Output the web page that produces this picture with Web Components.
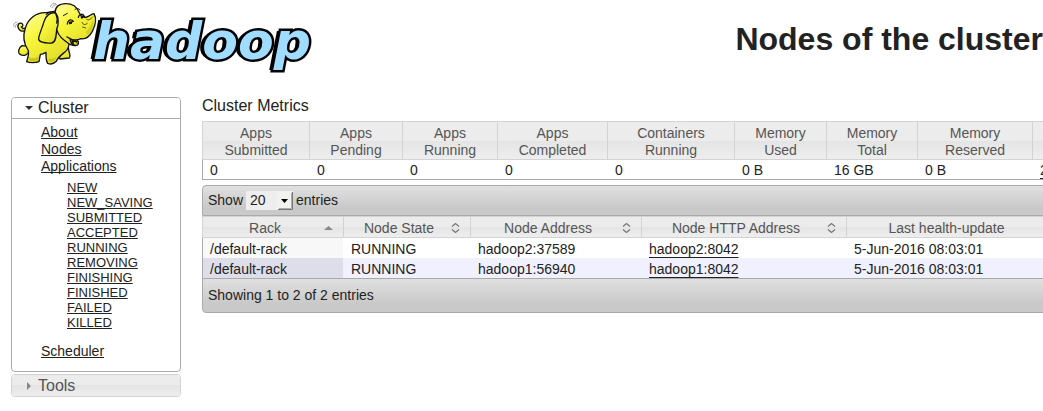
<!DOCTYPE html>
<html lang="en">
<head>
<meta charset="utf-8">
<meta name="viewport" content="width=device-width, initial-scale=1">
<title>Nodes of the cluster</title>
<style>
  body {
    margin: 0;
    overflow-x: hidden;
    background: #fff;
    color: #222;
    font: 14px/17px "Liberation Sans", Arial, sans-serif;
  }
</style>
</head>
<body>
<cluster-page>
  <hadoop-logo slot="logo"></hadoop-logo>
  <span slot="title">Nodes of the cluster</span>
  <nav-section slot="nav" data-label="Cluster" data-open>
    <nav-links></nav-links>
  </nav-section>
  <nav-section slot="nav" data-label="Tools"></nav-section>
  <cluster-metrics></cluster-metrics>
  <nodes-table></nodes-table>
</cluster-page>

<script>
class ClusterPage extends HTMLElement {
  constructor() {
    super();
    this.attachShadow({ mode: 'open' });
  }

  connectedCallback() {
    this.shadowRoot.innerHTML = `
      <style>
        :host {
          display: block;
          overflow: hidden;
        }

        header {
          display: flex;
          justify-content: space-between;
          padding-left: 11px;
          margin-bottom: 19px;
        }

        h1 {
          margin: 0;
          font-size: 32px;
          line-height: 78px;
          white-space: nowrap;
        }

        .layout {
          display: grid;
          grid-template-columns: 170px minmax(0, 1fr);
          gap: 21px;
          padding-left: 11px;
        }

        nav {
          display: flex;
          flex-direction: column;
          gap: 2px;
        }

        /* Wide tables run past the right edge of a narrow window */
        main {
          display: flex;
          flex-direction: column;
          gap: 5px;
          min-width: 916px;
        }
      </style>

      <header>
        <slot name="logo"></slot>
        <h1><slot name="title"></slot></h1>
      </header>
      <div class="layout">
        <nav><slot name="nav"></slot></nav>
        <main><slot></slot></main>
      </div>
    `;
  }
}

class HadoopLogo extends HTMLElement {
  constructor() {
    super();
    this.attachShadow({ mode: 'open' });
  }

  connectedCallback() {
    this.shadowRoot.innerHTML = `
      <style>
        :host {
          display: flex;
          flex: none;
          height: 78px;
        }

        svg {
          flex: none;
          position: relative;
          z-index: 1;
        }

        span {
          margin-left: -7px;
          font: italic bold 52px/82px "DejaVu Sans", Verdana, sans-serif;
          color: #9fdcff;
          -webkit-text-stroke: 5px #000;
          paint-order: stroke fill;
          text-shadow: -2px 0 #000, -4px 0 #000;
        }
      </style>

      <svg width="89" height="70" viewBox="33 0 267 210" aria-hidden="true">
        <defs>
          <linearGradient id="skin" x1="0" y1="0" x2="0.6" y2="1">
            <stop offset="0" stop-color="#ffffa8"/>
            <stop offset="0.45" stop-color="#f8f63c"/>
            <stop offset="1" stop-color="#e4df2a"/>
          </linearGradient>
        </defs>
        <g fill="url(#skin)" stroke="#111" stroke-width="4" stroke-linejoin="round" stroke-linecap="round">
          <path d="M76 92C66 96 58 92 55 84C51 74 58 67 65 70C70 73 70 79 64 81M64 81C68 87 72 87 78 84"/>
          <path d="M66 137C55 144 53 158 60 163C68 169 80 166 84 159L92 140Z"/>
          <path d="M172 150L180 177L208 174C213 166 208 160 207 154L203 134Z"/>
          <path d="M139 38C111 36 84 55 76 84C68 108 72 132 84 150C89 159 83 174 80 185C88 189 106 189 117 185L121 163C128 163 133 160 138 157C138 168 137 180 143 190C153 194 164 189 169 184C173 172 184 165 195 156C205 148 208 137 207 124L164 34Z"/>
          <path d="M165 40C165 21 178 11 198 11C220 11 231 21 237 37C242 49 249 54 260 51C270 48 273 42 282 41C291 57 287 75 277 94C268 111 255 118 242 116L232 120C239 129 235 138 225 137C210 137 202 127 192 120C180 111 170 96 168 78Z"/>
          <path d="M168 40C151 35 137 47 132 65C127 84 114 109 116 119C121 129 139 130 155 129C168 127 169 105 170 88C176 75 177 52 168 40Z"/>
        </g>
        <g fill="none" stroke="#111" stroke-width="4" stroke-linecap="round" stroke-linejoin="round">
          <path d="M139 43C147 34 158 35 165 36M168 43C172 51 173 60 170 69M201 111C211 118 221 121 232 119M210 115C211 126 216 134 225 136"/>
          <path d="M202 72C203 61 213 55 220 64M235 52C237 42 247 39 253 49"/>
          <path d="M190 47L202 40M225 28C230 24 236 25 240 30" stroke-width="3"/>
          <path d="M246 67C249 76 257 75 262 70M248 81L257 84M260 58C267 63 273 56 278 51" stroke-width="2"/>
          <path d="M41 79C40 71 46 65 51 66M46 82C46 76 49 72 53 71M151 20C154 12 161 9 167 11M156 23C159 17 164 14 170 14" stroke-width="2" stroke="#777"/>
        </g>
        <path d="M207 65L219 63L215 72L207 73ZM242 48L252 47L249 55L243 56Z" fill="#111"/>
        <path d="M214 120L229 121C235 128 233 135 225 135C218 133 214 128 214 120Z" fill="#141400"/>
        <path d="M220 128C225 124 231 128 231 132C228 136 223 134 220 128Z" fill="#e4df25"/>
        <path d="M87 170C95 176 106 176 116 169L114 181C103 185 93 184 86 181ZM146 174C154 180 163 176 169 171L164 181C157 186 150 187 147 184Z" fill="#b9b316" opacity="0.65"/>
        <path d="M257 97C267 85 276 72 280 56C284 75 276 92 264 105Z" fill="#c9c21c" opacity="0.65"/>
      </svg>
      <span>hadoop</span>
    `;
  }
}

class NavSection extends HTMLElement {
  constructor() {
    super();
    this.attachShadow({ mode: 'open' });
  }

  connectedCallback() {
    this.render();
  }

  render() {
    const label = this.getAttribute('data-label') || '';
    const open = this.hasAttribute('data-open');

    this.shadowRoot.innerHTML = `
      <style>
        :host {
          display: block;
          box-sizing: border-box;
          border: 1px solid #d3d3d3;
          border-radius: 4px;
          overflow: hidden;
        }

        :host([data-open]) {
          border-color: #aaa;
        }

        button {
          display: flex;
          align-items: center;
          gap: 4px;
          width: 100%;
          margin: 0;
          padding: 0 0 0 12px;
          border: 0;
          background: linear-gradient(#ececec 50%, #e4e4e4 50%, #eee);
          color: #555;
          font: inherit;
          font-size: 16px;
          line-height: 21px;
          text-align: left;
        }

        button[aria-expanded="true"] {
          border-bottom: 1px solid #aaa;
          background: #fff;
          color: #222;
          line-height: 20px;
        }
      </style>

      <button type="button" aria-expanded="${open}">
        <svg width="10" height="10" viewBox="0 0 10 10" aria-hidden="true">
          ${open ? '<path d="M1 3h8L5 7z" fill="#333"/>' : '<path d="M3 1v8l4-4z" fill="#888"/>'}
        </svg>
        ${label}
      </button>
      ${open ? '<slot></slot>' : ''}
    `;

    this.shadowRoot.querySelector('button').addEventListener('click', () => {
      this.toggleAttribute('data-open');
      this.render();
    });
  }
}

class NavLinks extends HTMLElement {
  constructor() {
    super();
    this.attachShadow({ mode: 'open' });
  }

  connectedCallback() {
    const states = ['NEW', 'NEW_SAVING', 'SUBMITTED', 'ACCEPTED', 'RUNNING', 'REMOVING', 'FINISHING', 'FINISHED', 'FAILED', 'KILLED'];

    this.shadowRoot.innerHTML = `
      <style>
        :host {
          display: block;
          padding: 5px 0 11px 29px;
        }

        ul {
          margin: 0;
          padding: 0;
          list-style: none;
        }

        ul ul {
          padding: 5px 0 13px 26px;
          font-size: 13px;
          line-height: 15px;
        }

        a {
          color: #222;
          text-decoration-skip-ink: none;
        }
      </style>

      <ul>
        <li><a href="#about">About</a></li>
        <li><a href="#nodes">Nodes</a></li>
        <li><a href="#apps">Applications</a>
          <ul>
            ${states.map(s => `<li><a href="#apps/${s}">${s}</a></li>`).join('')}
          </ul>
        </li>
        <li><a href="#scheduler">Scheduler</a></li>
      </ul>
    `;
  }
}

const tableStyles = `
  table {
    table-layout: fixed;
    width: 100%;
    border-collapse: separate;
    border-spacing: 0;
  }

  th {
    box-sizing: border-box;
    border: solid #d3d3d3;
    border-width: 1px 0 1px 1px;
    background: linear-gradient(#ececec 50%, #e4e4e4 50%, #eee);
    color: #555;
    font-weight: normal;
  }

  td {
    padding: 2px 0 0 8px;
    white-space: nowrap;
  }

  td:first-child {
    border-left: 1px solid #aaa;
    padding-left: 7px;
  }

  td a {
    color: #222;
    text-decoration-skip-ink: none;
    text-underline-offset: 3px;
  }
`;

class ClusterMetrics extends HTMLElement {
  constructor() {
    super();
    this.attachShadow({ mode: 'open' });
  }

  connectedCallback() {
    const metrics = [
      ['Apps Submitted', '0', 107],
      ['Apps Pending', '0', 93],
      ['Apps Running', '0', 95],
      ['Apps Completed', '0', 110],
      ['Containers Running', '0', 127],
      ['Memory Used', '0 B', 92],
      ['Memory Total', '16 GB', 91],
      ['Memory Reserved', '0 B', 115],
      ['Active Nodes', '<a href="#nodes">2</a>', 86]
    ];

    this.shadowRoot.innerHTML = `
      <style>
        ${tableStyles}

        :host {
          display: block;
        }

        h2 {
          margin: 0 0 7px;
          font-size: 16px;
          font-weight: normal;
          line-height: 17px;
        }

        th {
          padding: 3px 0 0;
        }

        td {
          border-bottom: 1px solid #aaa;
        }
      </style>

      <h2 id="metrics">Cluster Metrics</h2>
      <table aria-labelledby="metrics">
        <colgroup>${metrics.map(m => `<col style="width: ${m[2]}px">`).join('')}</colgroup>
        <thead>
          <tr>${metrics.map(m => `<th>${m[0].replace(' ', '<br>')}</th>`).join('')}</tr>
        </thead>
        <tbody>
          <tr>${metrics.map(m => `<td>${m[1]}</td>`).join('')}</tr>
        </tbody>
      </table>
    `;
  }
}

class NodesTable extends HTMLElement {
  constructor() {
    super();
    this.attachShadow({ mode: 'open' });
  }

  connectedCallback() {
    const columns = [
      ['Rack', 141],
      ['Node State', 127],
      ['Node Address', 171],
      ['Node HTTP Address', 205],
      ['Last health-update', 216],
      ['', 56]
    ];
    const nodes = [
      ['/default-rack', 'RUNNING', 'hadoop2:37589', 'hadoop2:8042', '5-Jun-2016 08:03:01', ''],
      ['/default-rack', 'RUNNING', 'hadoop1:56940', 'hadoop1:8042', '5-Jun-2016 08:03:01', '']
    ];
    const sorted = '<path d="M4 10h9L8.5 6z" fill="#888"/>';
    const unsorted = '<path d="M5 6.5L8.5 3.5 12 6.5M5 9.5L8.5 12.5 12 9.5" fill="none" stroke="#777" stroke-width="1.3"/>';

    this.shadowRoot.innerHTML = `
      <style>
        ${tableStyles}

        :host {
          display: block;
        }

        .bar {
          box-sizing: border-box;
          display: flex;
          align-items: center;
          padding: 0 5px;
          border: 1px solid #aaa;
          background: linear-gradient(#e0e0e0, #c9c9c9 75%);
        }

        .top {
          height: 31px;
          border-radius: 4px 4px 0 0;
        }

        .bottom {
          height: 35px;
          border-radius: 0 0 4px 4px;
        }

        label {
          display: flex;
          align-items: center;
          gap: 3px;
        }

        .picker {
          position: relative;
          display: flex;
        }

        select {
          appearance: none;
          width: 47px;
          height: 19px;
          margin: 0;
          padding: 0 16px 0 4px;
          border: 0;
          border-radius: 0;
          background: #eee;
          color: #222;
          font: inherit;
        }

        /* Drop-down button over the right end of the select */
        .picker svg {
          position: absolute;
          right: 0;
          top: 0;
          pointer-events: none;
        }

        .head {
          display: flex;
          align-items: center;
          padding: 2px 7px 0;
          line-height: 18px;
        }

        .head span {
          flex: 1;
          white-space: nowrap;
        }

        th {
          padding: 0;
        }

        td {
          padding-top: 3px;
        }

        tbody tr:nth-child(even) {
          background: #f0f0ff;
        }

        td:first-child {
          background: #f8f8f8;
        }

        tr:nth-child(even) td:first-child {
          background: #dedeeb;
        }
      </style>

      <div class="bar top">
        <label>
          Show
          <span class="picker">
            <select>
              <option selected>20</option>
              <option>40</option>
              <option>60</option>
              <option>80</option>
              <option>100</option>
            </select>
            <svg width="16" height="19" viewBox="0 0 16 19" aria-hidden="true">
              <path d="M0 0h16v19H0z" fill="#f2f2f0"/>
              <path d="M1 18.5h14.5V1" fill="none" stroke="#777" stroke-width="1"/>
              <path d="M2 17.5h12.5V2" fill="none" stroke="#aaa" stroke-width="1"/>
              <path d="M4 8h7l-3.5 4z" fill="#000"/>
            </svg>
          </span>
          entries
        </label>
      </div>
      <table>
        <colgroup>${columns.map(c => `<col style="width: ${c[1]}px">`).join('')}</colgroup>
        <thead>
          <tr>
            ${columns.map((c, i) => `
            <th${i === 0 ? ' aria-sort="ascending"' : ''}>
              <div class="head">
                <span>${c[0]}</span>
                <svg width="16" height="16" viewBox="0 0 16 16" aria-hidden="true">${i === 0 ? sorted : unsorted}</svg>
              </div>
            </th>`).join('')}
          </tr>
        </thead>
        <tbody>
          ${nodes.map(n => `
          <tr>${n.map((v, i) => `<td>${i === 3 ? `<a href="http://${v}">${v}</a>` : v}</td>`).join('')}</tr>`).join('')}
        </tbody>
      </table>
      <div class="bar bottom">Showing 1 to 2 of 2 entries</div>
    `;
  }
}

customElements.define('cluster-page', ClusterPage);
customElements.define('hadoop-logo', HadoopLogo);
customElements.define('nav-section', NavSection);
customElements.define('nav-links', NavLinks);
customElements.define('cluster-metrics', ClusterMetrics);
customElements.define('nodes-table', NodesTable);
</script>
</body>
</html>
